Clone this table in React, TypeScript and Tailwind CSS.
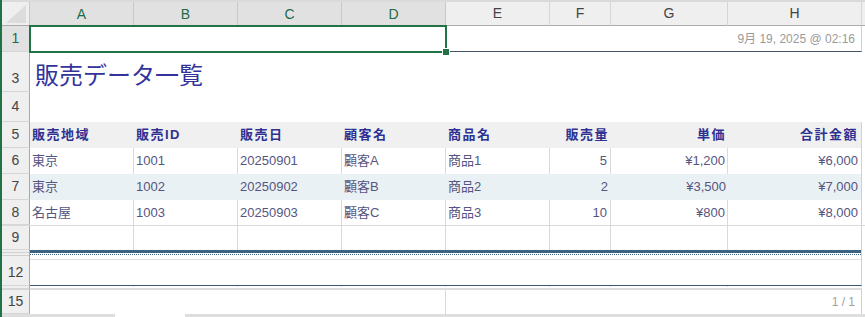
const grid = 'grid grid-cols-[28px_104px_104px_104px_104px_104px_61px_117px_134px_1fr]'

const rows = [
  { area: '東京', id: '1001', date: '20250901', cust: '顧客A', item: '商品1', qty: '5', price: '¥1,200', total: '¥6,000' },
  { area: '東京', id: '1002', date: '20250902', cust: '顧客B', item: '商品2', qty: '2', price: '¥3,500', total: '¥7,000' },
  { area: '名古屋', id: '1003', date: '20250903', cust: '顧客C', item: '商品3', qty: '10', price: '¥800', total: '¥8,000' },
]

function RowHead({ n, sel, end }: { n: string; sel?: boolean; end?: boolean }) {
  return (
    <div
      className={`flex justify-center border-r border-r-[#a8a8a8] border-b border-b-[#d6d6d6] text-[14px] ${
        end ? 'items-end pb-[2px]' : 'items-center'
      } ${sel ? 'bg-[#e1e1e1] text-[#1e6b48]' : 'bg-[#efefef] text-[#444]'}`}
    >
      {n}
    </div>
  )
}

function Gridline({ bg = 'bg-white', lines = true }: { bg?: string; lines?: boolean }) {
  const b = lines ? 'border-r border-[#dadada]' : ''
  return (
    <>
      <div className={`${bg} ${b}`} />
      <div className={`${bg} ${b}`} />
      <div className={`${bg} ${b}`} />
      <div className={`${bg} ${b}`} />
      <div className={`${bg} ${b}`} />
      <div className={`${bg} ${b}`} />
      <div className={`${bg} ${b}`} />
      <div className={`${bg} border-r border-[#d0d0d0]`} />
      <div className="bg-white" />
    </>
  )
}

export default function App() {
  const cell = 'flex items-center px-[2px] text-[13px] text-[#55557f] whitespace-nowrap'
  const head = 'flex items-center text-[13px] font-bold tracking-[1.5px] text-[#2e3192] bg-[#f0f0f0] whitespace-nowrap'
  return (
    <div className="w-[865px] h-[317px] overflow-hidden bg-white flex font-['Liberation_Sans','Noto_Sans_CJK_JP',sans-serif]">
      <div className="w-[2px] shrink-0 bg-[#217346]" />
      <div className="relative flex-1 flex flex-col">
        {/* column letters */}
        <div className={`${grid} h-[26px] border-t-2 border-[#dadada]`}>
          <div className="relative bg-[#efefef] border-r border-r-[#c8c8c8] border-b border-b-[#ababab]">
            <svg className="absolute left-[4px] top-[3px]" width="20" height="18" viewBox="0 0 20 18">
              <polygon points="20,0 20,18 0,18" fill="#dcdcdc" />
            </svg>
          </div>
          {['A', 'B', 'C', 'D'].map(c => (
            <div key={c} className="flex items-center justify-center bg-[#e1e1e1] border-r border-[#c8c8c8] text-[14px] text-[#1e6b48]">
              {c}
            </div>
          ))}
          {['E', 'F', 'G', 'H'].map(c => (
            <div key={c} className="flex items-center justify-center bg-[#efefef] border-r border-r-[#d6d6d6] border-b border-b-[#ababab] text-[14px] text-[#444]">
              {c}
            </div>
          ))}
          <div className="bg-[#efefef] border-b border-b-[#ababab]" />
        </div>

        {/* row 1 */}
        <div className={`${grid} h-[26px]`}>
          <RowHead n="1" sel />
          <div className="col-span-4" />
          <div className="col-span-4 flex items-center justify-end pr-[6px] border-b border-b-[#44546a] border-r border-r-[#d0d0d0] text-[12px] text-[#9a9a9a]">
            9月 19, 2025 @ 02:16
          </div>
          <div />
        </div>

        {/* row 3 */}
        <div className={`${grid} h-[40px]`}>
          <RowHead n="3" end />
          <div className="col-span-8 flex items-center pl-[5px] pt-[4px] text-[24px] text-[#33339c] font-['Noto_Sans_CJK_JP',sans-serif]">
            販売データ一覧
          </div>
          <div />
        </div>

        {/* row 4 */}
        <div className={`${grid} h-[30px]`}>
          <RowHead n="4" />
          <div className="col-span-8" />
          <div />
        </div>

        {/* row 5 header */}
        <div className={`${grid} h-[26px]`}>
          <RowHead n="5" />
          <div className={`${head} pl-[2px]`}>販売地域</div>
          <div className={`${head} pl-[2px]`}>販売ID</div>
          <div className={`${head} pl-[2px]`}>販売日</div>
          <div className={`${head} pl-[2px]`}>顧客名</div>
          <div className={`${head} pl-[2px]`}>商品名</div>
          <div className={`${head} justify-end pr-[2px]`}>販売量</div>
          <div className={`${head} justify-end pr-[2px]`}>単価</div>
          <div className={`${head} justify-end pr-[3px] border-r border-[#d0d0d0]`}>合計金額</div>
          <div />
        </div>

        {/* data rows */}
        {rows.map((r, i) => {
          const striped = i === 1
          const bg = striped ? 'bg-[#eaf1f4]' : 'bg-white'
          const line = striped ? '' : 'border-r border-[#dadada]'
          const last = i === rows.length - 1
          return (
            <div key={r.id} className={`${grid} h-[26px] ${last ? 'border-b border-[#dadada]' : ''}`}>
              <RowHead n={String(i + 6)} />
              <div className={`${cell} ${bg} ${line}`}>{r.area}</div>
              <div className={`${cell} ${bg} ${line}`}>{r.id}</div>
              <div className={`${cell} ${bg} ${line}`}>{r.date}</div>
              <div className={`${cell} ${bg} ${line}`}>{r.cust}</div>
              <div className={`${cell} ${bg} ${line}`}>{r.item}</div>
              <div className={`${cell} ${bg} ${line} justify-end pr-[3px]`}>{r.qty}</div>
              <div className={`${cell} ${bg} ${line} justify-end`}>{r.price}</div>
              <div className={`${cell} ${bg} justify-end pr-[3px] border-r border-[#d0d0d0]`}>{r.total}</div>
              <div />
            </div>
          )
        })}

        {/* row 9 */}
        <div className={`${grid} h-[24px]`}>
          <RowHead n="9" />
          <Gridline />
        </div>

        {/* hidden rows 10-11 */}
        <div className={`${grid} h-[10px]`}>
          <div className="bg-[#efefef] border-r border-[#a8a8a8] flex flex-col">
            <div className="h-[2px]" />
            <div className="h-[1px] bg-[#d0d0d0]" />
            <div className="h-[2px]" />
            <div className="h-[1px] bg-[#d0d0d0]" />
          </div>
          <div className="col-span-8 flex flex-col border-r border-[#d0d0d0]">
            <div className="h-[3px] bg-[#3d6383]" />
            <div className="h-[1px]" />
            <div className="border-t border-dotted border-[#3d6383]" />
            <div className="flex-1" />
            <div className="h-[1px] bg-[#dedede]" />
          </div>
          <div />
        </div>

        {/* row 12 */}
        <div className={`${grid} h-[26px]`}>
          <RowHead n="12" />
          <div className="col-span-8 border-b border-b-[#3f5873] border-r border-r-[#d0d0d0]" />
          <div />
        </div>

        {/* hidden rows 13-14 */}
        <div className={`${grid} h-[4px]`}>
          <div className="bg-[#efefef] border-r border-r-[#a8a8a8] border-b-2 border-b-[#d6d6d6]" />
          <div className="col-span-8 grid grid-cols-[104px_104px_104px_104px_104px_61px_117px_134px] border-b-2 border-[#dcdcdc]">
            <Gridline />
          </div>
          <div />
        </div>

        {/* row 15 */}
        <div className={`${grid} h-[24px]`}>
          <RowHead n="15" />
          <div className="col-span-4 border-r border-[#dadada]" />
          <div className="col-span-4 flex items-center justify-end pr-[6px] border-r border-[#d0d0d0] text-[12px] text-[#a0a0a0]">
            1 / 1
          </div>
          <div />
        </div>

        {/* scroll edge */}
        <div className="flex h-[3px]">
          <div className="w-[113px] bg-[#dedede]" />
          <div className="w-[70px] bg-white" />
          <div className="flex-1 bg-[#dedede]" />
        </div>

        {/* selection over A1:D1 */}
        <div className="absolute left-[27px] top-[25px] w-[418px] h-[28px] border-2 border-[#217346]" />
        <div className="absolute left-[441px] top-[49px] w-[6px] h-[6px] bg-[#217346] outline outline-1 outline-white" />
      </div>
    </div>
  )
}
